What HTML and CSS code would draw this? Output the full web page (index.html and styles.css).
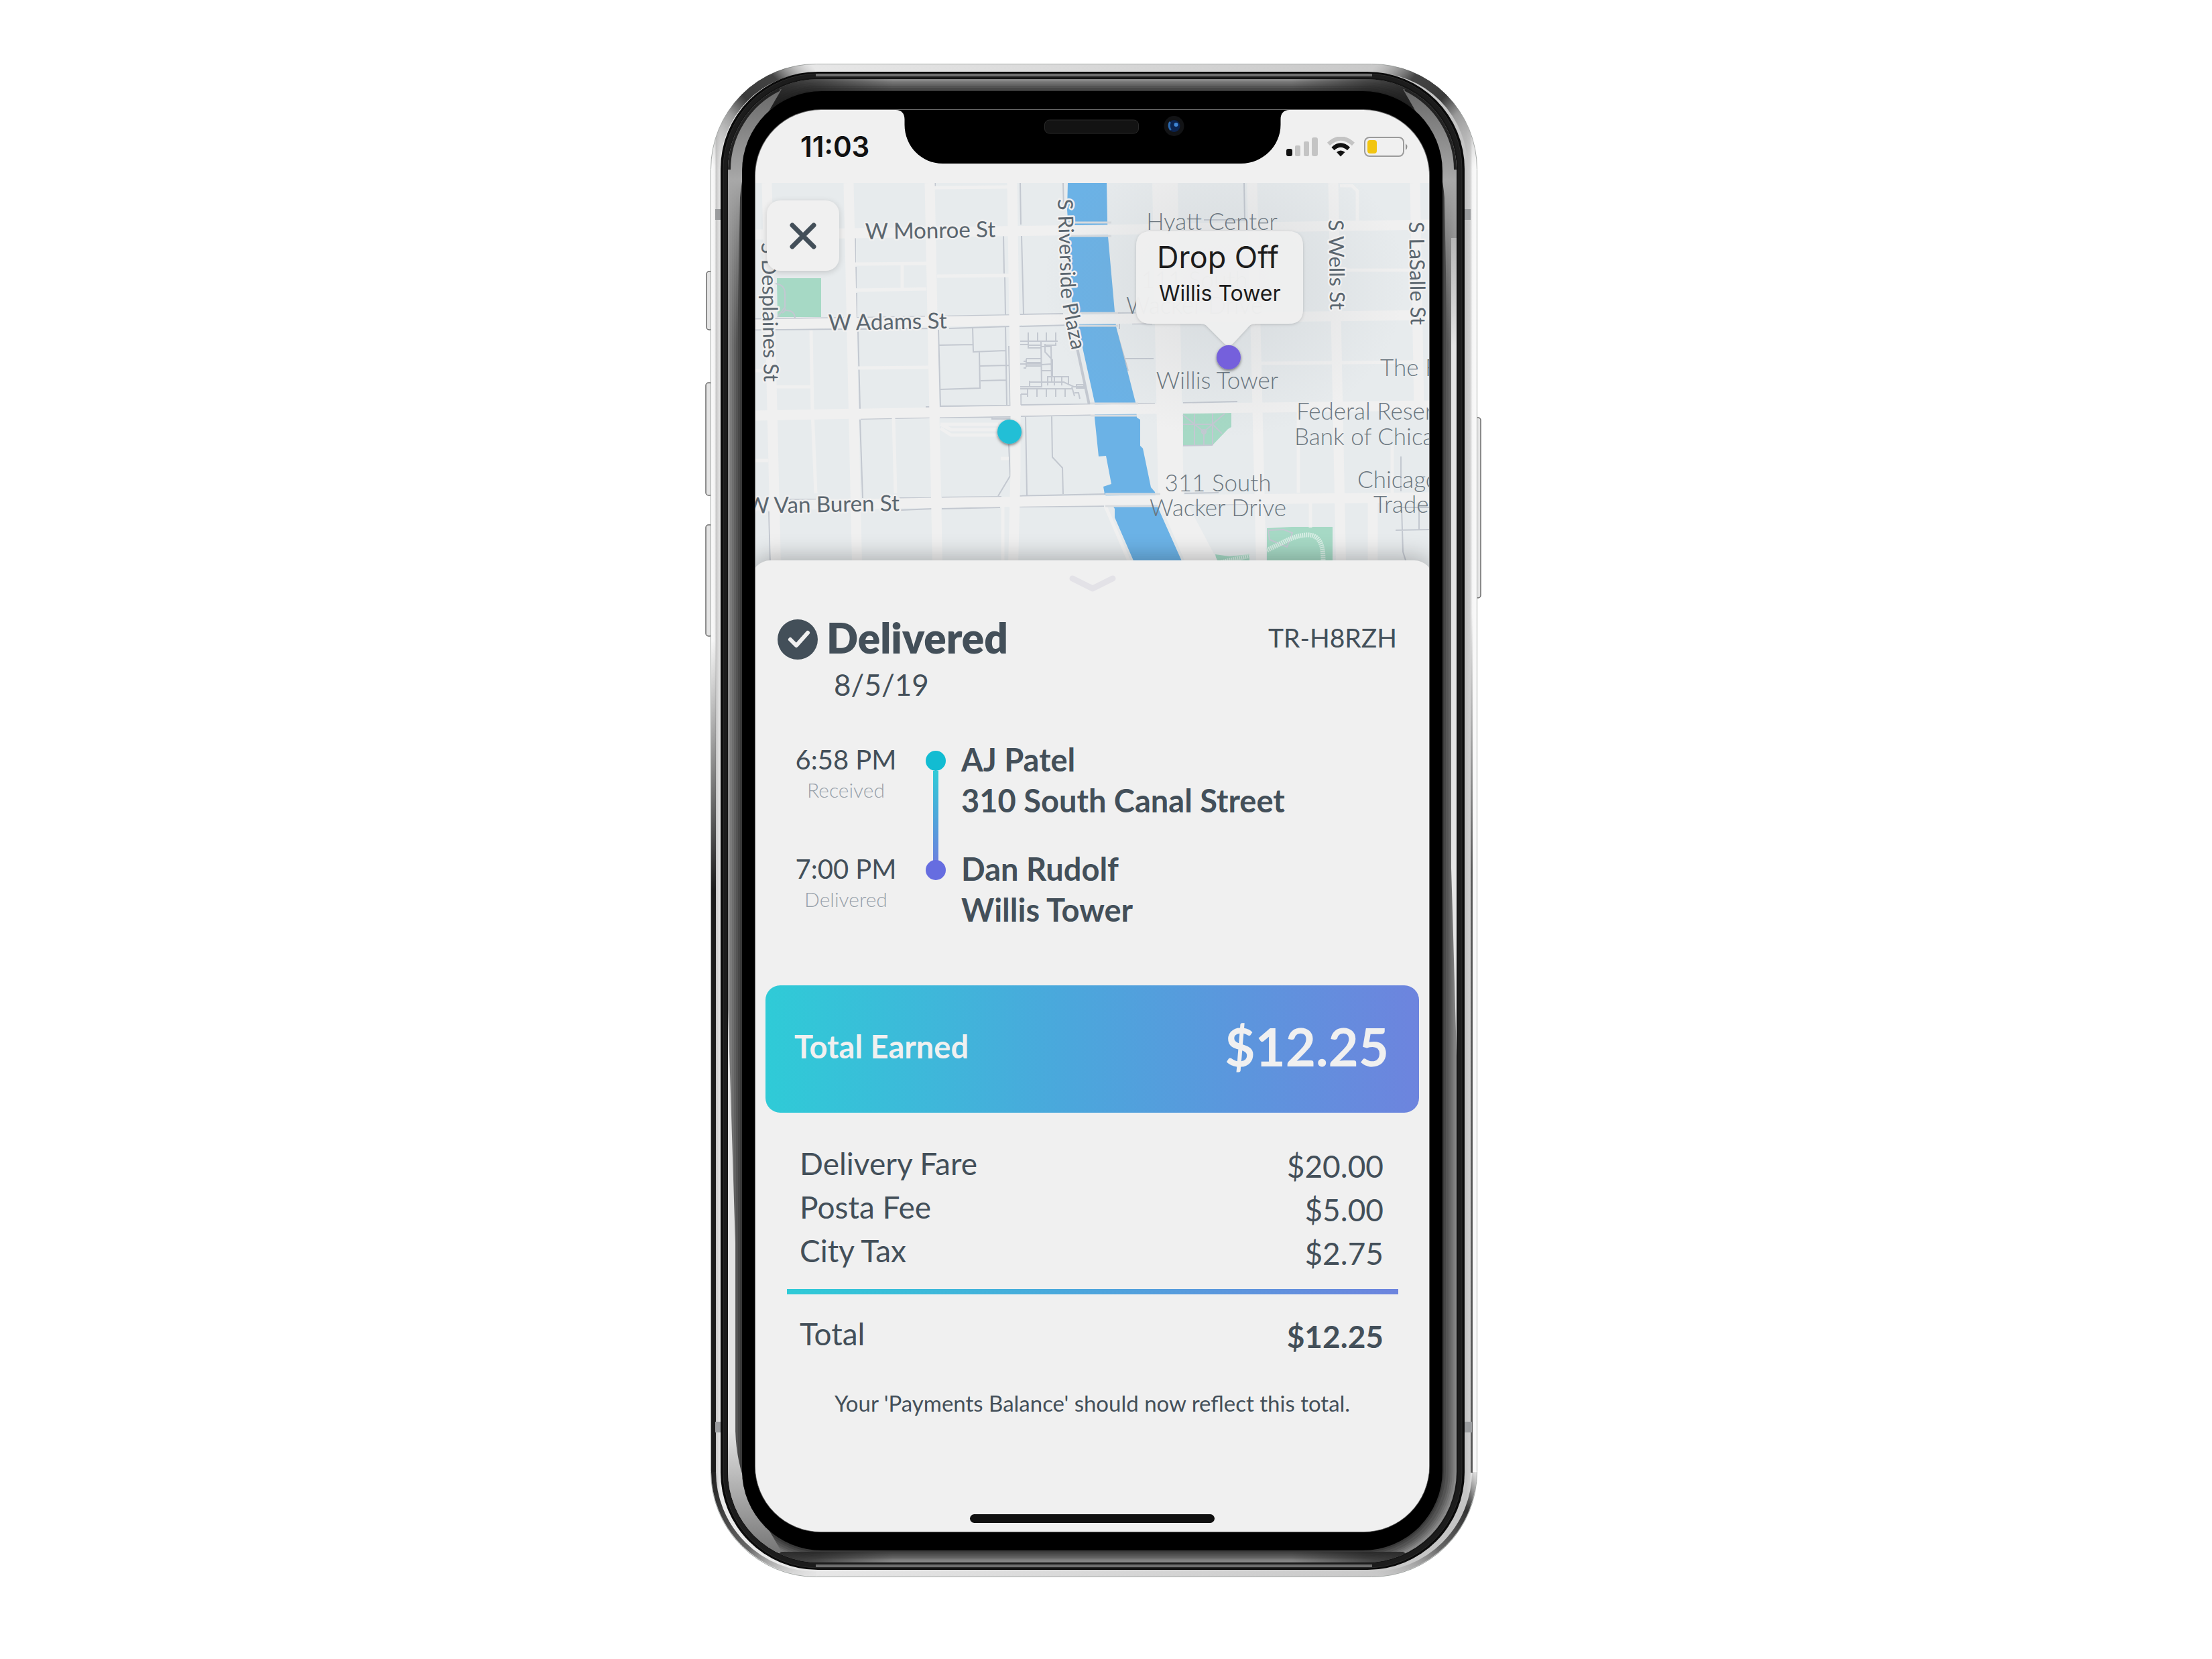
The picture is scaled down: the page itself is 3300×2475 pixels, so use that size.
FILE: index.html
```html
<!DOCTYPE html>
<html lang="en">
<head>
<meta charset="utf-8">
<meta name="viewport" content="width=device-width, initial-scale=1">
<title>Delivery TR-H8RZH</title>
<link rel="stylesheet" href="styles.css">
</head>
<body>
<main class="stage">
  <div class="phone">
    <svg class="phone-shell" viewBox="0 0 1158 2258" aria-hidden="true">
      <defs>
        <linearGradient id="corner" x1="0" y1="1" x2="1" y2="0">
          <stop offset="0" stop-color="#bbb" stop-opacity="0"/>
          <stop offset=".35" stop-color="#999"/>
          <stop offset=".5" stop-color="#3a3a3a"/>
          <stop offset=".75" stop-color="#444"/>
          <stop offset="1" stop-color="#999" stop-opacity="0"/>
        </linearGradient>
        <linearGradient id="edgeDown" x1="0" y1="0" x2="0" y2="1">
          <stop offset="0" stop-color="#222" stop-opacity="0"/>
          <stop offset=".3" stop-color="#1c1c1c"/>
          <stop offset="1" stop-color="#1c1c1c"/>
        </linearGradient>
        <linearGradient id="edgeTurn" gradientUnits="userSpaceOnUse" x1="12" y1="2090" x2="170" y2="2258">
          <stop offset="0" stop-color="#1c1c1c"/>
          <stop offset=".55" stop-color="#666"/>
          <stop offset="1" stop-color="#ccc" stop-opacity="0"/>
        </linearGradient>
        <linearGradient id="edgeTurnSoft" gradientUnits="userSpaceOnUse" x1="12" y1="2090" x2="170" y2="2258">
          <stop offset="0" stop-color="#444" stop-opacity="0"/>
          <stop offset=".25" stop-color="#333"/>
          <stop offset=".55" stop-color="#666"/>
          <stop offset="1" stop-color="#ccc" stop-opacity="0"/>
        </linearGradient>
        <linearGradient id="foldTop" gradientUnits="userSpaceOnUse" x1="110" y1="0" x2="280" y2="0">
          <stop offset="0" stop-color="#1a1a1a" stop-opacity=".85"/>
          <stop offset="1" stop-color="#1a1a1a" stop-opacity="0"/>
        </linearGradient>
        <linearGradient id="glareFade" gradientUnits="userSpaceOnUse" x1="0" y1="40" x2="0" y2="420">
          <stop offset="0" stop-color="#6a6a6a"/>
          <stop offset=".35" stop-color="#a8a8a8"/>
          <stop offset="1" stop-color="#8e8e8e" stop-opacity="0"/>
        </linearGradient>
        <linearGradient id="glareLow" gradientUnits="userSpaceOnUse" x1="0" y1="2220" x2="0" y2="2040">
          <stop offset="0" stop-color="#777"/>
          <stop offset="1" stop-color="#e2e2e2"/>
        </linearGradient>
        <linearGradient id="metal" x1="0" y1="0" x2="1" y2="0">
          <stop offset="0" stop-color="#fafafa"/>
          <stop offset=".005" stop-color="#f4f4f4"/>
          <stop offset=".007" stop-color="#c8c8c8"/>
          <stop offset=".013" stop-color="#ececec"/>
          <stop offset=".986" stop-color="#c4c4c4"/>
          <stop offset=".991" stop-color="#cfcfcf"/>
          <stop offset=".994" stop-color="#f6f6f6"/>
          <stop offset="1" stop-color="#fafafa"/>
        </linearGradient>
        <clipPath id="bevel"><rect x="34" y="23" width="1087" height="2213" rx="135"/></clipPath>
        <g id="topCorner">
          <path d="M20 20H290V46H160L90 70 60 120H20Z" fill="url(#foldTop)"/>
          <path d="M30 60L114 38C84 90 58 130 52 200L48 420H30Z" fill="url(#glareFade)"/>
          <path d="M34 158A135 135 0 0 1 110 37" fill="none" stroke="#222" stroke-width="8"/>
        </g>
        <g id="bottomCorner">
          <path d="M114 2220H290V2240H80Z" fill="url(#foldTop)"/>
        </g>
      </defs>
      <g fill="#e4e4e4" stroke="#6b6b6b" stroke-width="1.5">
        <rect x="2" y="310" width="9" height="87" rx="4"/>
        <rect x="1" y="476" width="10" height="168" rx="4"/>
        <rect x="1" y="688" width="10" height="166" rx="4"/>
        <rect x="1149" y="528" width="8" height="269" rx="4"/>
      </g>
      <rect x="8.500" y=".5" width="1143" height="2257" rx="157" fill="url(#metal)" stroke="#a4a8a6"/>
      <path d="M16 157A148 148 0 0 1 164 7" fill="none" stroke="url(#corner)" stroke-width="13"/>
      <path d="M16 157A148 148 0 0 1 164 7" fill="none" stroke="url(#corner)" stroke-width="13" transform="translate(1160 0) scale(-1 1)"/>
      <rect x="9" y="860" width="7" height="1242" fill="url(#edgeDown)"/>
      <path d="M12.500 2101A153 153 0 0 0 165 2253" fill="none" stroke="url(#edgeTurn)" stroke-width="7"/>
      <path d="M12.500 2101A153 153 0 0 0 165 2253" fill="none" stroke="url(#edgeTurnSoft)" stroke-width="7" transform="translate(1160 0) scale(-1 1)"/>
      <rect x="1142" y="820" width="3" height="1282" fill="url(#edgeDown)" opacity=".7"/>
      <g fill="#9a9c9e">
        <rect x="15" y="217" width="8" height="16"/><rect x="1133" y="217" width="9" height="16"/>
        <rect x="15" y="2026" width="8" height="16"/><rect x="1133" y="2026" width="11" height="16"/>
      </g>
      <rect x="23" y="12" width="1110" height="2235" rx="145" fill="#0a0a0a"/>
      <rect x="27" y="15" width="1102" height="2229" rx="142" fill="#1c1c1c" stroke="#2c2c2c"/>
      <path d="M165 17H995M165 2241H995" stroke="#6e6e6e" stroke-width="4"/>
      <rect x="33" y="21" width="1090" height="2216" rx="136" fill="#141414"/>
      <rect x="34" y="23" width="1087" height="2213" rx="135" fill="#888"/>
      <rect x="37" y="26" width="1081" height="2207" rx="133" fill="#7b7b7b"/>
      <rect x="40" y="28" width="1075" height="2203" rx="131" fill="#6e6e6e"/>
      <rect x="43" y="31" width="1069" height="2198" rx="129" fill="#616161"/>
      <rect x="46" y="33" width="1063" height="2194" rx="127" fill="#545454"/>
      <rect x="49" y="36" width="1056" height="2188" rx="125" fill="#474747"/>
      <rect x="52" y="39" width="1050" height="2182" rx="122" fill="#3a3a3a"/>
      <g clip-path="url(#bevel)">
        <path d="M1113 260H1121V1480L1116 1300 1113 1200Z" fill="#e6e6e6"/>
        <path d="M34 1410L40 1600 45 1760V2040C48 2120 80 2160 114 2220L60 2230H34Z" fill="url(#glareLow)"/>
        <use href="#topCorner"/>
        <use href="#topCorner" transform="translate(1155 0) scale(-1 1)"/>
        <use href="#bottomCorner"/>
        <use href="#bottomCorner" transform="translate(1155 0) scale(-1 1)"/>
      </g>
      <rect x="55" y="41" width="1045" height="2177" rx="119" fill="#000"/>
      <rect x="74" y="68" width="1007" height="2123" rx="99" fill="#6a6a6a"/>
    </svg>

    <div class="screen">
      <header class="status">
        <time class="clock">11:03</time>
        <svg class="notch" width="587" height="80" viewBox="0 0 587 80" aria-hidden="true">
          <path d="M0-2V0C8 0 13 5 13 14V22C13 54 38 80 70 80H515C547 80 574 54 574 22V14C574 5 579 0 587 0V-2Z"/>
          <rect x="222" y="15" width="140" height="20" rx="7" fill="#131313" stroke="#2a2a2a"/>
          <circle cx="415" cy="24" r="15" fill="#121315"/>
          <circle cx="415" cy="24" r="9" fill="#0b2350"/>
          <path d="M409 18Q406 24 410 30" stroke="#2c69ad" stroke-width="3" fill="none"/>
          <circle cx="418" cy="22" r="3" fill="#3f86d6"/>
        </svg>
        <svg class="status-icons" width="182" height="30" viewBox="0 0 182 30" role="img" aria-label="Signal, Wi-Fi and battery">
          <rect x="0" y="18" width="9" height="11" rx="3" fill="#111"/>
          <g fill="#c4c4c4">
            <rect x="13" y="13" width="8" height="16" rx="2"/>
            <rect x="26" y="7" width="8" height="22" rx="2"/>
            <rect x="38" y="1" width="9" height="28" rx="3"/>
          </g>
          <path d="M63 11Q81-6 100 11" fill="none" stroke="#c4c4c4" stroke-width="6"/>
          <path d="M69.500 18Q81 7 93 18" fill="none" stroke="#111" stroke-width="6"/>
          <path d="M75 23Q81 18 87.500 23L81 29.500Z" fill="#111"/>
          <rect x="117" y="1" width="58" height="28" rx="7" fill="none" stroke="#9b9b9b" stroke-width="2"/>
          <path d="M178 10Q183 15 178 20Z" fill="#8f8f8f"/>
          <rect x="121" y="5" width="14" height="20" rx="4" fill="#f2c511"/>
        </svg>
      </header>

      <section class="map" aria-label="Map">
        <svg class="map-art" viewBox="0 0 1005 591" preserveAspectRatio="xMidYMin slice">
          <defs>
            <path id="riverside" d="M451 24L456 168Q458 186 476 268"/>
            <filter id="drop" x="-50%" y="-50%" width="200%" height="200%">
              <feDropShadow dx="0" dy="2" stdDeviation="2" flood-color="#000" flood-opacity=".5"/>
            </filter>
            <filter id="soft" x="-20%" y="-20%" width="140%" height="140%">
              <feDropShadow dx="0" dy="1" stdDeviation="2" flood-color="#000" flood-opacity=".18"/>
            </filter>
            <radialGradient id="shade">
              <stop offset="0" stop-color="#8b939b" stop-opacity=".2"/>
              <stop offset="1" stop-color="#8b939b" stop-opacity="0"/>
            </radialGradient>
          </defs>
          <rect width="1005" height="591" fill="#e7ebed"/>

          <!-- parks -->
          <g fill="#a6d9c5">
            <path d="M32 142H98V200H33Z"/>
            <path d="M638 344L710 343V364L705 367 682 391 638 392Z"/>
            <path d="M763 515L800 513H861V591H763Z"/>
            <path d="M686 554L707 557 737 554V591H695Z"/>
          </g>
          <g fill="none" stroke="#c3c8d2" stroke-width="2">
            <path d="M30 150Q44 152 44 165V185L33 200M44 187Q46 190 40 194M45 190Q59 190 59 202"/>
            <path d="M638 360H682M655 345V391M682 344V391M638 346L669 371 700 344M669 371V391M682 360L696 374M682 391L638 392"/>
            <circle cx="669" cy="371" r="3"/>
            <path d="M765 518L788 517 801 522 793 543 767 532Z"/>
          </g>

          <!-- alleys and lot lines -->
          <g fill="none" stroke="#c3c8d0" stroke-width="2">
            <path d="M268 0V5M395 0L396 62M397 79L400 195M459 0L460 40M149 82V119M150 125V157M151 164V201M370 79L371 135M372 140L373 196"/>
            <path d="M0 203L132 201M151 201L253 199M267 199L379 197M395 196L459 195M0 219L132 218M153 218L270 217M289 217L379 214M394 214L465 212"/>
            <path d="M729 0L730 55H669M531 75H577M541 194H567M562 210H592M153 220L156 337M273 219L276 334M273 242L324 241M324 215L325 252 373 250M334 252L335 306 275 308M335 273L378 272M336 295L374 294M373 214L375 332M378 243L380 332M276 333L381 332M396 331L499 330M254 334H260"/>
            <path d="M157 352L260 350M275 350L381 349M396 348L500 346M156 353L160 470M403 349L405 466M442 348L443 409 458 425 459 464M378 390L380 437 362 467M353 349V352H381M215 470L264 470M278 469L367 468M391 467L523 464M48 472H90M217 488L264 486M278 486L365 484M391 483L520 482M20 490L22 563"/>
            <path d="M395 236H451M407 223V246H426M421 223V236M434 223V236M448 223V236M395 241H407M407 242H426M426 236L427 305M427 244H441L442 297M432 240V252L443 264V289M432 242H448V238M404 262H426M404 262V275M400 266H404M395 270H426M404 268H426M404 273H426M400 276H404M427 280H441M427 271L442 270M436 302V289H467V300M446 289V302M457 289V302M409 297H460L475 304H491M409 295V304H426M395 304H409M395 307H472M406 307V319M420 307V319M434 307V319M448 307V319M462 307V319M472 304L476 318M476 313H482L484 322M396 315H406M396 315V331M479 301H490V306H479Z"/>
            <path d="M539 222L556 280M543 210V218M552 262H594M570 329H596M638 328L719 326M640 463L691 462M644 480L742 479M963 408V460M964 485L966 550 970 563M990 475V517M955 518L1005 517M964 484H1005"/>
          </g>
          <path d="M479 242L498 331" stroke="#c3c8d0" stroke-width="4"/>

          <!-- minor streets -->
          <g fill="none" stroke="#f0f0f0" stroke-width="5">
            <path d="M267 7L376 6M148 121L255 120M271 139L378 138M150 160L255 158M219 122V158M153 276L258 275M31 304H83M0 280H17M0 414H19M753 269L983 267M870 130H977M872 4H890L898 12V56M276 360H362M276 360L292 368H362M276 366L292 376H362"/>
            <path d="M83 220L85 340 90 463M206 350L209 463M369 483V563M810 340V462M828 477V514M950 390V462M522 482L562 575M366 411H378"/>
          </g>

          <!-- river -->
          <path d="M466 0H524L525 57 526 80 536 192 538 214 567 327 569 350 574 353V392L578 396 590 454 596 461 600 483 648 591H576L536 499V486L521 464 519 453 531 449 523 407 512 408 506 350 506 327 481 214 473 192 468 80 465 40Z" fill="#6bb2e6"/>

          <!-- streets -->
          <g fill="none" stroke="#f0f0f0" stroke-width="15">
            <path d="M17 0L31 591M139 0L152 591M260 0L272 591M383 0L388 337V430L384 591M741 0L755 591M862 0L874 591M921 470V591M984 0L990 335"/>
            <path d="M0 77L513 70 1005 62M0 211L493 203 1005 197M0 347L493 338 1005 332M0 481L493 474 1005 469"/>
            <path d="M611 0L620 475" stroke-width="38"/>
          </g>
          <path d="M600 470H640L704 591H652Z" fill="#f0f0f0"/>
          <path d="M464 59H531M466 79H531M472 194H541M480 213H541M500 329H571M500 347H569M522 464H604M522 482H600" stroke="#d9dcdf" stroke-width="3"/>
          <path d="M763 548C790 535 805 525 824 525C842 525 847 540 847 563V591M695 566L737 556" fill="none" stroke="#d8eee5" stroke-width="7" stroke-dasharray="2 1"/>
          <ellipse cx="700" cy="150" rx="270" ry="230" fill="url(#shade)"/>

          <!-- street names -->
          <g class="street">
            <text transform="translate(164 84) rotate(-1)">W Monroe St</text>
            <text transform="translate(109 220) rotate(-1)">W Adams St</text>
            <text transform="translate(215 489) rotate(-1)" text-anchor="end">W Van Buren St</text>
          </g>
          <g class="street street-down">
            <text transform="translate(9 89) rotate(89)">S Desplaines St</text>
            <text><textPath href="#riverside">S Riverside Plaza</textPath></text>
            <text transform="translate(855 55) rotate(89)">S Wells St</text>
            <text transform="translate(975 58) rotate(89)">S LaSalle St</text>
          </g>
          <g class="place">
            <text x="681" y="70">Hyatt Center</text>
            <text x="655" y="157">111 South</text>
            <text x="655" y="195">Wacker Drive</text>
            <text x="689" y="307">Willis Tower</text>
            <text x="690" y="460">311 South</text>
            <text x="690" y="497">Wacker Drive</text>
          </g>
          <g class="place place-start">
            <text x="932" y="288">The Rookery</text>
            <text x="807" y="353">Federal Reserve</text>
            <text x="804" y="391">Bank of Chicago</text>
            <text x="898" y="455">Chicago Board</text>
            <text x="922" y="492">Trade</text>
          </g>

          <!-- pins and drop-off bubble -->
          <circle cx="379" cy="371" r="18" fill="#23bfd6" filter="url(#drop)"/>
          <path d="M590 72H795Q817 72 817 94V188Q817 210 795 210H745Q739 210 735 215L712 240Q706 246 700 240L675 215Q671 210 665 210H590Q568 210 568 188V94Q568 72 590 72Z" fill="#f0f0f0" fill-opacity=".97" filter="url(#soft)"/>
          <g class="bubble">
            <text class="bubble-title" x="599" y="127">Drop Off</text>
            <text class="bubble-place" x="602" y="176">Willis Tower</text>
          </g>
          <circle cx="706" cy="260" r="18" fill="#7460dc" filter="url(#drop)"/>
        </svg>
        <button class="close" type="button" aria-label="Close">
          <svg width="40" height="40" viewBox="0 0 40 40" aria-hidden="true"><path d="M4 4L36 36M36 4L4 36"/></svg>
        </button>
      </section>

      <article class="sheet">
        <button class="grabber" type="button" aria-label="Collapse details">
          <svg width="72" height="30" viewBox="0 0 72 30" aria-hidden="true"><path d="M6 6L36 21 66 6"/></svg>
        </button>

        <header class="summary">
          <svg class="check" width="60" height="60" viewBox="0 0 60 60" aria-hidden="true"><circle cx="30" cy="30" r="30"/><path d="M19 30L28 39 45 20"/></svg>
          <div class="summary-text">
            <h1>Delivered</h1>
            <p class="date">8/5/19</p>
          </div>
          <p class="code">TR-H8RZH</p>
        </header>

        <ol class="stops">
          <li class="stop">
            <div class="when"><time>6:58 PM</time><small>Received</small></div>
            <div class="rail"><span class="dot dot-from"></span><span class="track"></span></div>
            <p class="who">AJ Patel<br>310 South Canal Street</p>
          </li>
          <li class="stop">
            <div class="when"><time>7:00 PM</time><small>Delivered</small></div>
            <div class="rail"><span class="dot dot-to"></span></div>
            <p class="who">Dan Rudolf<br>Willis Tower</p>
          </li>
        </ol>

        <section class="earned">
          <h2>Total Earned</h2>
          <strong>$12.25</strong>
        </section>

        <table class="fares">
          <tbody>
            <tr><th scope="row">Delivery Fare</th><td>$20.00</td></tr>
            <tr><th scope="row">Posta Fee</th><td>$5.00</td></tr>
            <tr><th scope="row">City Tax</th><td>$2.75</td></tr>
          </tbody>
          <tfoot>
            <tr class="divider"><td colspan="2"><div></div></td></tr>
            <tr><th scope="row">Total</th><td class="sum">$12.25</td></tr>
          </tfoot>
        </table>

        <p class="note">Your 'Payments Balance' should now reflect this total.</p>

        <div class="home"></div>
      </article>
    </div>
  </div>
</main>
</body>
</html>
```
FILE: styles.css
```css
* { box-sizing: border-box; }

body {
  margin: 0;
  background: #fff;
  color: #434f59;
  font-family: Lato, "Liberation Sans", sans-serif;
}

h1, h2, p, ol { margin: 0; padding: 0; }
button { border: 0; padding: 0; background: none; cursor: pointer; }

.stage {
  display: flex;
  justify-content: center;
  padding: 95px 38px 95px 0;
}

.phone {
  position: relative;
  width: 1158px;
  padding: 69px 78px 68px 75px;
}

.phone-shell {
  position: absolute;
  inset: 0;
  width: 100%;
  height: 100%;
}

.screen {
  position: relative;
  display: flex;
  flex-direction: column;
  min-height: 2121px;
  border-radius: 98px;
  overflow: hidden;
  background: #f0f0f0;
}

/* status bar */
.status {
  display: flex;
  justify-content: space-between;
  align-items: center;
  height: 109px;
  padding: 0 31px 0 67px;
}
.clock {
  color: #111;
  font: 600 42px/40px Inter, sans-serif;
}
.notch {
  position: absolute;
  top: 0;
  left: 50%;
  transform: translateX(-50%);
}

/* map */
.map { position: relative; }
.map-art {
  display: block;
  width: 100%;
  height: 591px;
}
.street {
  fill: #5b666f;
  font-size: 33px;
  stroke: #f0f0f0;
  stroke-width: 5px;
  stroke-linejoin: round;
  paint-order: stroke;
}
.street-down { font-size: 31px; }
.place {
  fill: #6c7780;
  font-size: 35px;
  font-weight: 300;
  text-anchor: middle;
}
.place-start { text-anchor: start; }
.bubble {
  fill: #1c1c1c;
  font-family: Inter, sans-serif;
}
.bubble-title { font-size: 45px; }
.bubble-place { font-size: 32px; }

.close {
  position: absolute;
  top: 26px;
  left: 17px;
  display: grid;
  place-items: center;
  width: 108px;
  height: 105px;
  border-radius: 20px;
  background: #f0f0f0;
  box-shadow: 0 2px 10px rgba(0, 0, 0, .16);
}
.close path {
  stroke: #434f59;
  stroke-width: 7;
  stroke-linecap: round;
}

/* details sheet */
.sheet {
  position: relative;
  flex: 1;
  display: flex;
  flex-direction: column;
  margin: -28px -6px 0;
  padding: 0 6px 13px;
  border-radius: 28px 28px 0 0;
  background: #f0f0f0;
  box-shadow: 0 -6px 32px rgba(0, 0, 0, .26);
}
.grabber {
  display: flex;
  justify-content: center;
  align-items: flex-start;
  height: 88px;
  padding-top: 21px;
}
.grabber path {
  fill: none;
  stroke: #e3e2e7;
  stroke-width: 9;
  stroke-linecap: round;
  stroke-linejoin: round;
}

.summary {
  display: flex;
  align-items: flex-start;
  padding: 0 48px 0 33px;
}
.check circle { fill: #434f59; }
.check path {
  fill: none;
  stroke: #f0f0f0;
  stroke-width: 6;
  stroke-linecap: round;
  stroke-linejoin: round;
}
.summary-text {
  flex: 1;
  padding-left: 13px;
}
.summary h1 {
  font-size: 62px;
  font-weight: 800;
  line-height: 54px;
}
.date {
  padding: 11px 0 0 11px;
  font-size: 44px;
  line-height: 64px;
}
.code {
  font-size: 39px;
  line-height: 54px;
}

.stops {
  padding: 50px 48px 0 39px;
  list-style: none;
}
.stop {
  display: grid;
  grid-template-columns: 192px 76px 1fr;
}
.stop:first-child .who { padding-bottom: 41px; }
.when { text-align: center; }
.when time {
  display: block;
  font-size: 40px;
  line-height: 61px;
}
.when small {
  display: block;
  color: #98a1aa;
  font-size: 30px;
  font-weight: 300;
  line-height: 28px;
}
.rail {
  display: flex;
  flex-direction: column;
  align-items: center;
  padding-top: 17px;
}
.dot {
  width: 30px;
  height: 30px;
  border-radius: 50%;
}
.dot-from { background: #12bcd2; }
.dot-to { position: relative; background: #666de0; }
.track {
  flex: 1;
  width: 8px;
  margin-bottom: -18px;
  background: linear-gradient(#30cbd7, #6b83de);
}
.who {
  font-size: 47px;
  font-weight: 700;
  line-height: 61px;
}

.earned {
  display: flex;
  justify-content: space-between;
  align-items: center;
  height: 190px;
  margin: 82px 15px 0;
  padding: 0 45px 8px 43px;
  border-radius: 22px;
  background: linear-gradient(90deg, #2fcbd7, #4aa8dc 45%, #6d84de);
  color: #f0f0f0;
}
.earned h2 {
  font-size: 47px;
  font-weight: 700;
}
.earned strong {
  font-size: 78px;
  font-weight: 700;
}

.fares {
  width: calc(100% - 93px);
  margin: 45px 46px 0 47px;
  border-collapse: collapse;
  font-size: 46px;
  line-height: 61px;
}
.fares th {
  padding: 0 0 4px 19px;
  font-weight: 400;
  text-align: left;
}
.fares td {
  padding: 4px 22px 0 0;
  text-align: right;
}
.fares .sum { font-weight: 700; }
.fares .divider td { padding: 23px 0 28px; }
.divider div {
  height: 8px;
  background: linear-gradient(90deg, #2fcbd7, #4aa8dc 45%, #6d84de);
}

.note {
  padding-top: 49px;
  font-size: 33px;
  line-height: 40px;
  text-align: center;
}

.home {
  width: 365px;
  height: 13px;
  margin: auto auto 0;
  border-radius: 7px;
  background: #101010;
}
```
